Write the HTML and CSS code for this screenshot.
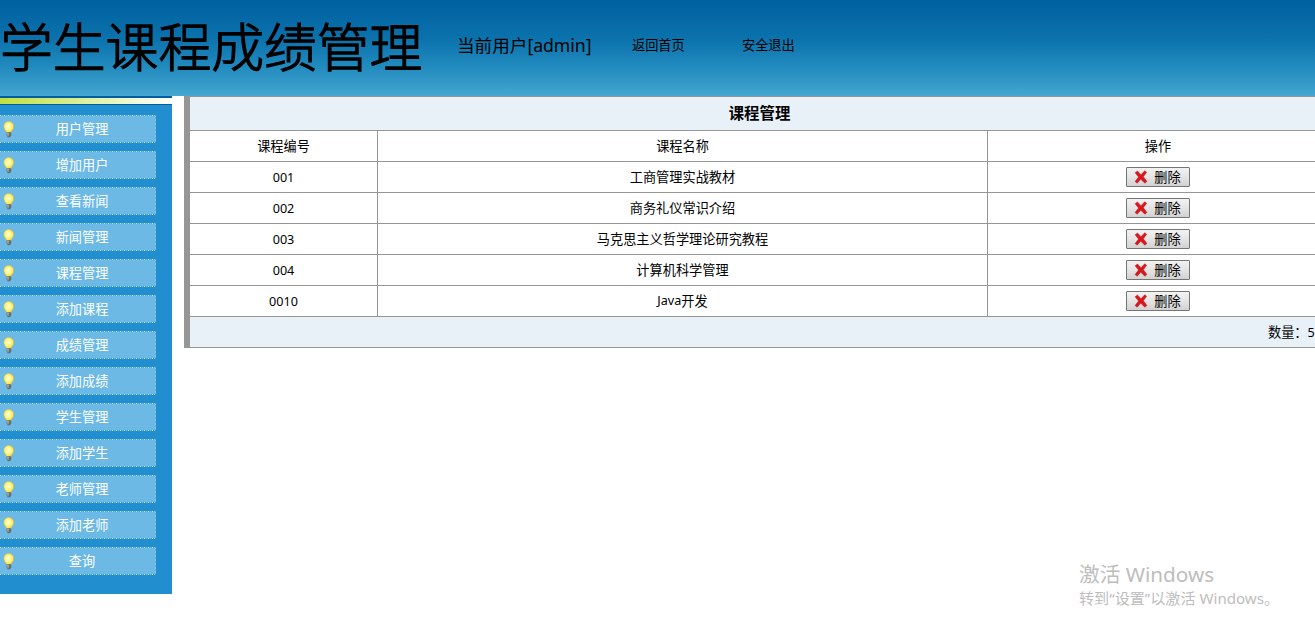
FILE: index.html
```html
<!DOCTYPE html>
<html lang="zh-CN">
<head>
<meta charset="utf-8">
<title>学生课程成绩管理</title>
<link rel="stylesheet" href="styles.css">
</head>
<body>
<svg class="defs" width="0" height="0" aria-hidden="true">
  <defs>
    <radialGradient id="glow" cx="45%" cy="45%" r="60%">
      <stop offset="0" stop-color="#fffff0"/><stop offset=".4" stop-color="#fff98c"/><stop offset=".8" stop-color="#f5e45a"/><stop offset="1" stop-color="#c9a94a"/>
    </radialGradient>
    <symbol id="bulb" viewBox="0 0 12 17">
      <path d="M5.700.500C2.800.500.800 2.700.800 5.400c0 2.300 2 3.600 2.600 6.100h4.800c.6-2.500 2.600-3.800 2.600-6.100C10.800 2.700 8.600.500 5.700.500z" fill="url(#glow)" stroke="#d5b860" stroke-width=".5"/>
      <path d="M3.600 11.300h4.600v3.300L7 16.300H4.900l-1.300-1.700z" fill="#66706f"/>
      <path d="M4 12.300h2M4 14h2" stroke="#c5cccc" stroke-width=".8"/>
    </symbol>
    <symbol id="cross" viewBox="0 0 14 14">
      <path d="M1 2.800 3.500.900 7 4.700 10.700.700 12.700 2.200 9.400 6.800 13 11.400 10.800 13.300 6.800 9.300 3.200 13.200 1 11.500 4.500 7z" fill="#d8171c" stroke="#b81c20" stroke-width=".4"/>
    </symbol>
  </defs>
</svg>
<header class="header">
  <h1 class="brand">学生课程成绩管理</h1>
  <span class="user">当前用户[admin]</span>
  <a class="link home">返回首页</a>
  <a class="link">安全退出</a>
</header>
<div class="body">
  <nav class="sidebar">
    <div class="stripe"></div>
    <ul class="menu">
      <li class="item"><svg class="bulb"><use href="#bulb"/></svg>用户管理</li>
      <li class="item"><svg class="bulb"><use href="#bulb"/></svg>增加用户</li>
      <li class="item"><svg class="bulb"><use href="#bulb"/></svg>查看新闻</li>
      <li class="item"><svg class="bulb"><use href="#bulb"/></svg>新闻管理</li>
      <li class="item"><svg class="bulb"><use href="#bulb"/></svg>课程管理</li>
      <li class="item"><svg class="bulb"><use href="#bulb"/></svg>添加课程</li>
      <li class="item"><svg class="bulb"><use href="#bulb"/></svg>成绩管理</li>
      <li class="item"><svg class="bulb"><use href="#bulb"/></svg>添加成绩</li>
      <li class="item"><svg class="bulb"><use href="#bulb"/></svg>学生管理</li>
      <li class="item"><svg class="bulb"><use href="#bulb"/></svg>添加学生</li>
      <li class="item"><svg class="bulb"><use href="#bulb"/></svg>老师管理</li>
      <li class="item"><svg class="bulb"><use href="#bulb"/></svg>添加老师</li>
      <li class="item"><svg class="bulb"><use href="#bulb"/></svg>查询</li>
    </ul>
  </nav>
  <main class="panel">
    <h2 class="caption">课程管理</h2>
    <div class="row"><span class="cell">课程编号</span><span class="cell">课程名称</span><span class="cell">操作</span></div>
    <div class="row"><span class="cell num">001</span><span class="cell">工商管理实战教材</span><span class="cell"><button class="delete"><svg class="cross"><use href="#cross"/></svg>删除</button></span></div>
    <div class="row"><span class="cell num">002</span><span class="cell">商务礼仪常识介绍</span><span class="cell"><button class="delete"><svg class="cross"><use href="#cross"/></svg>删除</button></span></div>
    <div class="row"><span class="cell num">003</span><span class="cell">马克思主义哲学理论研究教程</span><span class="cell"><button class="delete"><svg class="cross"><use href="#cross"/></svg>删除</button></span></div>
    <div class="row"><span class="cell num">004</span><span class="cell">计算机科学管理</span><span class="cell"><button class="delete"><svg class="cross"><use href="#cross"/></svg>删除</button></span></div>
    <div class="row"><span class="cell num">0010</span><span class="cell"><span class="latin">Java</span>开发</span><span class="cell"><button class="delete"><svg class="cross"><use href="#cross"/></svg>删除</button></span></div>
    <div class="total">数量：<span class="latin">5</span></div>
  </main>
</div>
<aside class="watermark">
  <p class="wm-title">激活 Windows</p>
  <p class="wm-text">转到<span class="quote">“</span>设置<span class="quote">”</span>以激活 Windows。</p>
</aside>
</body>
</html>
```
FILE: styles.css
```css
* { box-sizing: border-box; }
body {
  margin: 0;
  height: 619px;
  overflow: hidden;
  background: #fff;
  color: #000;
  font: 13.2px/20px "Noto Sans", "Noto Sans CJK SC", sans-serif;
}
.defs { position: absolute; }
.header {
  display: flex;
  align-items: center;
  height: 96px;
  padding-bottom: 6px;
  background: linear-gradient(#0060a0, #0b72ac 40%, #2089bd 68%, #44a6d1);
  white-space: nowrap;
}
.brand {
  width: 457px;
  margin: 4px 0 0;
  font-size: 52.8px;
  line-height: 70px;
  font-weight: 300;
  -webkit-text-stroke: 1.3px #000;
}
.user { width: 175px; font-size: 17.6px; }
.link { width: 110px; }
.body { display: flex; align-items: flex-start; }
.sidebar { width: 172px; height: 498px; flex: none; background: #218fcf; }
.stripe {
  height: 9px;
  border-top: 2px solid #00609f;
  border-bottom: 1px solid #00609f;
  background: linear-gradient(90deg, #c3df3e, #fff);
}
.menu {
  display: flex;
  flex-direction: column;
  gap: 8px;
  margin: 10px 16px 0 0;
  padding: 0;
  list-style: none;
}
.item {
  display: flex;
  align-items: center;
  height: 28px;
  padding: 0 7px 0 3px;
  background:
    repeating-linear-gradient(90deg, #c6e7f9 0 1px, #48a5da 1px 2px, #80c4eb 2px 3px, #48a5da 3px 4px) top / 100% 1px no-repeat,
    repeating-linear-gradient(90deg, #c6e7f9 0 1px, #2d96d2 1px 2px, #80c4eb 2px 3px, #2d96d2 3px 4px) bottom / 100% 1px no-repeat,
    repeating-linear-gradient(#85c7ec 0 2px, #5cafe0 2px 4px) right / 1px 100% no-repeat,
    #6cb9e5;
  color: #fff;
}
.bulb { width: 12px; height: 17px; margin-right: auto; margin-top: 1px; }
.item::after { content: ""; margin-left: auto; }
.panel {
  width: 1145px;
  flex: none;
  margin-left: 12px;
  border-left: 6px solid #969696;
  border-top: 1px solid #969696;
}
.caption {
  height: 34px;
  margin: 0;
  border-bottom: 1px solid #969696;
  background: #e8f1f8;
  font-size: 15.4px;
  line-height: 33px;
  text-align: center;
}
.row {
  display: grid;
  grid-template-columns: 188px 610px 1fr;
  height: 31px;
  border-bottom: 1px solid #969696;
}
.cell {
  display: flex;
  align-items: center;
  justify-content: center;
  border-right: 1px solid #969696;
}
.num, .latin { font-size: 12.6px; }
.num { padding-top: 1px; }
.delete {
  display: flex;
  align-items: center;
  justify-content: center;
  gap: 6px;
  width: 64px;
  height: 20px;
  padding: 0;
  border: 1px solid #757575;
  border-radius: 1px;
  background: linear-gradient(#f2f2f2, #e5e5e5 48%, #d2d2d2);
  color: #000;
  font: 13.2px/18px "Noto Sans CJK SC", sans-serif;
}
.cross { width: 14px; height: 14px; margin-left: -1px; }
.total {
  height: 31px;
  padding-left: 1078px;
  border-bottom: 1px solid #969696;
  background: #e8f1f8;
  line-height: 30px;
  white-space: nowrap;
}
.watermark {
  position: absolute;
  left: 1079px;
  top: 562px;
  color: #bdbdbd;
  white-space: nowrap;
}
.watermark p { margin: 0; }
.wm-title { font-size: 20.7px; line-height: 25px; }
.wm-text { font-size: 15.1px; line-height: 23px; }
```
